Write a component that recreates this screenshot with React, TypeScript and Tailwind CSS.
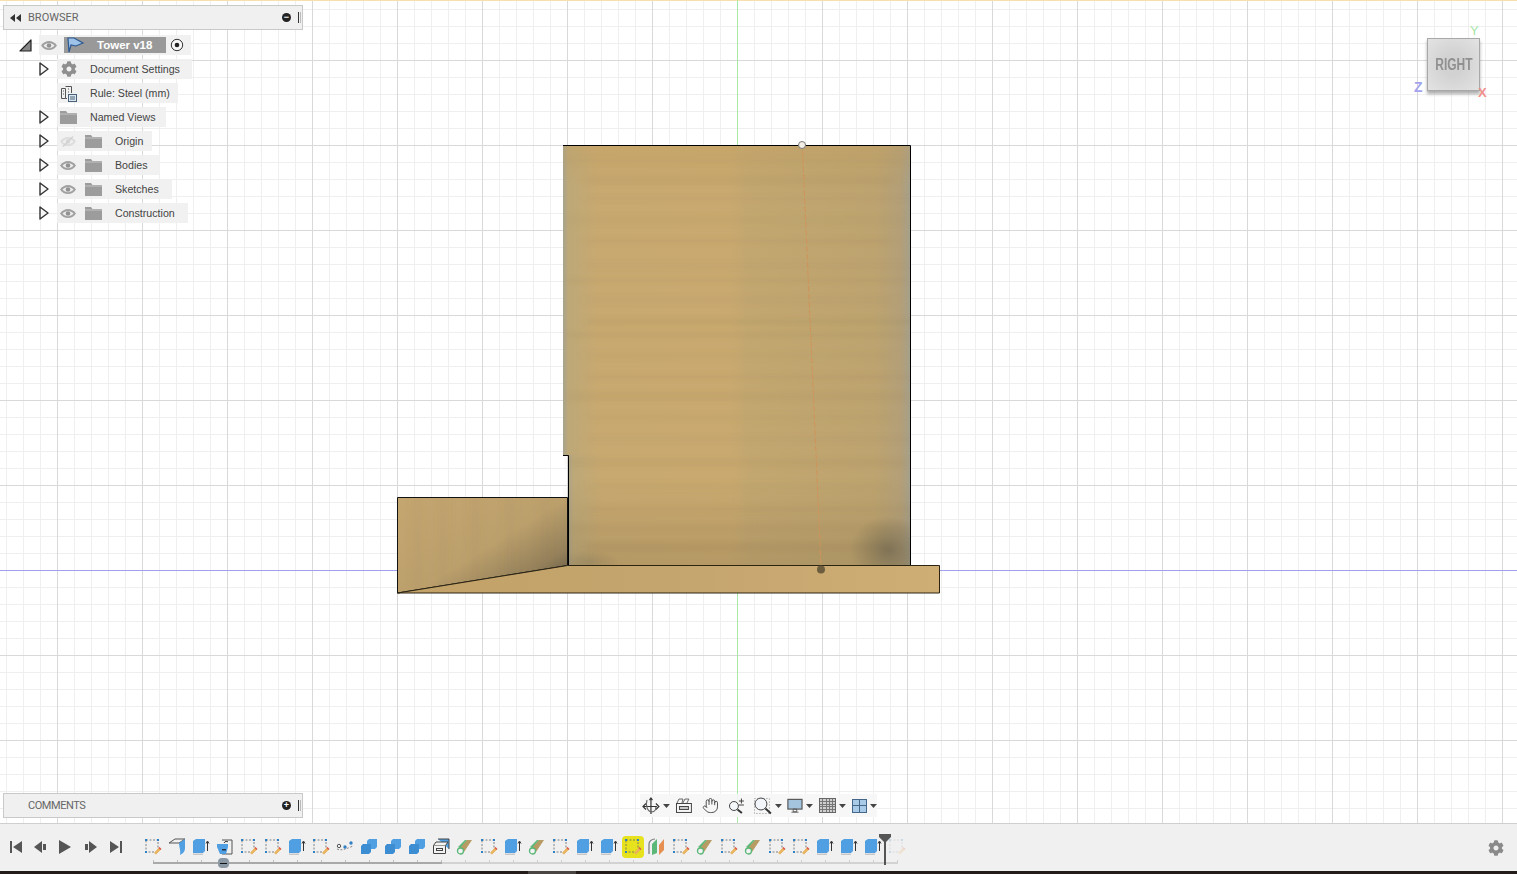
import React from 'react';
import { FaCog } from 'react-icons/fa';
import { Hand } from 'lucide-react';

const STREAKS = [
  [158, 6, 0.06], [176, 9, 0.08], [196, 5, 0.05], [215, 10, 0.06], [238, 6, 0.07], [262, 7, 0.05], [278, 5, 0.08],
  [296, 8, 0.05], [318, 7, 0.09], [332, 6, 0.1], [352, 7, 0.06], [374, 6, 0.07], [392, 9, 0.08], [414, 7, 0.06],
  [436, 6, 0.05], [458, 9, 0.08], [482, 8, 0.06], [506, 6, 0.07], [524, 8, 0.08], [542, 10, 0.12],
];

const BLOCK_STRIPES = [412, 438, 470, 505, 540];

const Model = () => (
  <svg className="absolute left-0 top-0" width="1517" height="823">
    <defs>
      <linearGradient id="wall" x1="0" x2="1" y1="0" y2="0">
        <stop offset="0" stopColor="#a8a38f" />
        <stop offset="0.015" stopColor="#bda878" />
        <stop offset="0.1" stopColor="#c8a970" />
        <stop offset="0.48" stopColor="#c9a96f" />
        <stop offset="0.53" stopColor="#c3a770" />
        <stop offset="0.9" stopColor="#bda36f" />
        <stop offset="0.975" stopColor="#b39f78" />
        <stop offset="1" stopColor="#a6a08a" />
      </linearGradient>
      <linearGradient id="wallFade" x1="0" x2="0" y1="0" y2="1">
        <stop offset="0" stopColor="#c19c5c" stopOpacity="0.3" />
        <stop offset="0.1" stopColor="#c19c5c" stopOpacity="0" />
        <stop offset="0.8" stopColor="#6f5f3f" stopOpacity="0" />
        <stop offset="1" stopColor="#6f5f3f" stopOpacity="0.22" />
      </linearGradient>
      <radialGradient id="shadeR" cx="0.5" cy="0.5" r="0.5">
        <stop offset="0" stopColor="#5f5a48" stopOpacity="0.55" />
        <stop offset="1" stopColor="#5f5a48" stopOpacity="0" />
      </radialGradient>
      <linearGradient id="block" x1="0" x2="1" y1="0" y2="0.9">
        <stop offset="0" stopColor="#c4a670" />
        <stop offset="0.55" stopColor="#bca06c" />
        <stop offset="0.82" stopColor="#94805a" />
        <stop offset="1" stopColor="#5f5543" />
      </linearGradient>
      <linearGradient id="base" x1="0" x2="1" y1="0" y2="0">
        <stop offset="0" stopColor="#c2a268" />
        <stop offset="0.5" stopColor="#c4a56d" />
        <stop offset="1" stopColor="#cfae75" />
      </linearGradient>
      <filter id="soft" x="-5%" y="-5%" width="110%" height="110%">
        <feGaussianBlur stdDeviation="4 2" />
      </filter>
      <filter id="softX" x="-5%" y="-5%" width="110%" height="110%">
        <feGaussianBlur stdDeviation="4 1" />
      </filter>
      <clipPath id="wallClip">
        <rect x="564" y="146" width="346" height="419" />
      </clipPath>
      <clipPath id="blockClip">
        <polygon points="398,498 567,498 567,565 398,592" />
      </clipPath>
    </defs>

    <rect x="737" y="0" width="1" height="823" fill="#a6eaa6" />
    <rect x="0" y="570" width="1517" height="1" fill="#a0a0f2" />

    {/* tall wall */}
    <rect x="563" y="145" width="347" height="310" fill="url(#wall)" />
    <rect x="568" y="455" width="342" height="110" fill="url(#wall)" />
    <rect x="563" y="145" width="347" height="420" fill="url(#wallFade)" />
    <g clipPath="url(#wallClip)">
      <g filter="url(#soft)">
        {STREAKS.map(([y, h, o], i) => (
          <rect key={y} x={i % 3 === 0 ? 566 : 585} y={y} width={i % 3 === 1 ? 310 : 342} height={h} fill="#8a7146" opacity={o} />
        ))}
      </g>
      <ellipse cx="888" cy="550" rx="38" ry="34" fill="url(#shadeR)" />
      <ellipse cx="590" cy="562" rx="30" ry="12" fill="url(#shadeR)" opacity="0.4" />
    </g>
    <path d="M563 145.5H910.5V565M563 455.5H568.5V565" fill="none" stroke="#000" strokeWidth="1" />

    <line x1="802.5" y1="150" x2="821" y2="566" stroke="#d0945a" strokeDasharray="6 2" />

    {/* side block and base */}
    <polygon points="397.5,497.5 567.5,497.5 567.5,565.5 397.5,593" fill="url(#block)" stroke="#111" />
    <g clipPath="url(#blockClip)">
      <g filter="url(#softX)">
        {BLOCK_STRIPES.map((x) => (
          <rect key={x} x={x} y="498" width="10" height="95" fill="#7f6b45" opacity="0.06" />
        ))}
      </g>
    </g>
    <polygon points="397.5,593 567.5,565.5 940,565.5 940,593" fill="url(#base)" />
    <path d="M397.5 593L567.5 565.5H939.5V593H397.5" fill="none" stroke="#2b2413" />

    <circle cx="802" cy="145" r="3.5" fill="#f4f0e8" stroke="#777" />
    <circle cx="821" cy="569.5" r="4" fill="#6c5d3e" />
  </svg>
);

const Eye = ({ off }: { off?: boolean }) => (
  <svg width="16" height="11" viewBox="0 0 16 11" className={off ? 'opacity-25' : ''}>
    <path d="M0 5.5C4 -0.5 12 -0.5 16 5.5C12 11.5 4 11.5 0 5.5Z" fill="#a0a0a0" />
    <path d="M2.5 5.5C5.5 2 10.5 2 13.5 5.5C10.5 9 5.5 9 2.5 5.5Z" fill="#ededed" />
    <circle cx="8" cy="5.5" r="2.3" fill="#929292" />
    {off && <path d="M3 10.5L13 0.5" stroke="#777" strokeWidth="1.5" />}
  </svg>
);

const Folder = () => (
  <svg width="17" height="13" viewBox="0 0 17 13">
    <path d="M0 0H6L7.5 2H17V13H0Z" fill="#9c9c9c" />
    <rect x="0" y="2.5" width="17" height="1" fill="#c4c4c4" />
  </svg>
);

const Arrow = () => (
  <svg width="10" height="14" viewBox="0 0 10 14">
    <path d="M1 1L9 7L1 13Z" fill="#f6f6f6" stroke="#333" strokeWidth="1.4" strokeLinejoin="round" />
  </svg>
);

const RuleIcon = () => (
  <svg width="17" height="17" viewBox="0 0 17 17" fill="none" stroke="#555">
    <path d="M1.5 3.5H5.5V13.5H1.5ZM5.5 1.5H11.5V8M5.5 13.5H7M3 6H4M3 9H4M8 4H9M8 7H9" />
    <rect x="8.5" y="9.5" width="8" height="7" fill="#dfe7ee" stroke="#46607a" />
    <path d="M10 12H15M10 14H15" stroke="#46607a" />
  </svg>
);

const TreeRow = ({
  label,
  icon,
  eye,
  off,
  arrow = true,
  width,
}: {
  label: string;
  icon: React.ReactNode;
  eye?: boolean;
  off?: boolean;
  arrow?: boolean;
  width: string;
}) => (
  <div className="flex h-6 items-center pl-[39px]">
    <div className="flex w-[18px] items-center">{arrow && <Arrow />}</div>
    <div className={`flex h-5 items-center bg-[#f0f0f0]/90 ${width} ${eye ? '' : 'pl-[3px]'}`}>
      {eye && (
        <div className="flex w-[28px] items-center justify-center pr-[6px]">
          <Eye off={off} />
        </div>
      )}
      <div className="flex w-[17px] items-center justify-center">{icon}</div>
      <span className="ml-[13px] pt-[2px] text-[10.65px] text-[#444]">{label}</span>
    </div>
  </div>
);

const PanelBar = ({ title, sign, back }: { title: string; sign: string; back?: boolean }) => (
  <div className="flex h-[25px] w-[300px] items-center border border-[#c9c9c9] bg-[#f0f0f0] pl-[6px] pr-[1px]">
    <div className="w-[18px] text-[#333]">
      {back && (
        <svg width="12" height="8" viewBox="0 0 12 8" fill="#333">
          <path d="M5 0V8L0 4ZM11 0V8L6 4Z" />
        </svg>
      )}
    </div>
    <span className={`pt-px font-['Roboto',sans-serif] text-[11px] text-[#666] ${back ? '' : 'tracking-[-0.45px]'}`}>
      {title}
    </span>
    <div className="ml-auto flex h-[9px] w-[9px] items-center justify-center rounded-full bg-[#222] text-[9px] font-bold leading-none text-white">
      {sign}
    </div>
    <div className="ml-[7px] h-[11px] w-[3px] border-x border-l-[#333] border-r-[#bbb]" />
  </div>
);

const Caret = () => (
  <svg width="7" height="4" viewBox="0 0 7 4" fill="#444" className="ml-[3px]">
    <path d="M0 0H7L3.5 4Z" />
  </svg>
);

const NavBar = () => (
  <div className="absolute left-[640px] top-[794px] flex h-[23px] w-[237px] items-center bg-[#f6f6f6]/90 pl-[2px]">
    <svg width="18" height="18" viewBox="0 0 18 18" fill="none" stroke="#333" strokeWidth="1.2">
      <path d="M9 1V17M1 9.5H15M4 6.5L1 9.5L4 12.5M14 6.5L17 9.5L14 12.5" />
      <path d="M5 3C3 9 6 15 10 15C13 15 14 12 14 10" stroke="#666" />
      <path d="M7.5 3L9 1L10.5 3" />
    </svg>
    <Caret />
    <svg width="18" height="16" viewBox="0 0 18 16" fill="none" stroke="#444" className="ml-[5px]">
      <rect x="1.5" y="5.5" width="15" height="9" />
      <rect x="4.5" y="8.5" width="9" height="3" fill="#c9c9c9" />
      <path d="M2 5L4 1H8L7 5M8 5L10 1H14L12 5" stroke="#666" />
    </svg>
    <Hand size={17} strokeWidth={1.3} color="#444" className="ml-[9px]" />
    <svg width="18" height="18" viewBox="0 0 18 18" fill="none" stroke="#444" className="ml-[9px]">
      <circle cx="6" cy="9" r="4.5" fill="#f5f8fb" />
      <path d="M9.5 12.5L14 16" stroke="#333" strokeWidth="2" />
      <path d="M11 4H16M13.5 1.5V6.5M11 8H16" strokeWidth="1" />
    </svg>
    <svg width="20" height="20" viewBox="0 0 20 20" fill="none" stroke="#444" className="ml-[7px]">
      <rect x="1.5" y="2.5" width="15" height="15" stroke="#888" strokeDasharray="1 2" />
      <circle cx="8" cy="8" r="6" fill="#f2f6fa" />
      <path d="M12.5 12.5L18 17.5" stroke="#333" strokeWidth="2" />
    </svg>
    <Caret />
    <svg width="16" height="16" viewBox="0 0 18 17" className="ml-[5px]">
      <rect x="1" y="1" width="16" height="11" fill="#a4c3dd" stroke="#555" strokeWidth="1.3" />
      <path d="M7 12H11V15H7ZM5 15.5H13" stroke="#555" fill="none" />
    </svg>
    <Caret />
    <div className="ml-[6px] grid h-[15px] w-[17px] grid-cols-[repeat(5,1fr)] grid-rows-[repeat(5,1fr)] gap-px border border-[#666] bg-[#777]">
      {Array.from({ length: 25 }).map((_, i) => (
        <div key={i} className="bg-[#cfcfcf]" />
      ))}
    </div>
    <Caret />
    <div className="ml-[6px] grid h-[14px] w-[15px] grid-cols-2 grid-rows-2 gap-px border border-[#45678a] bg-[#45678a]">
      <div className="bg-[#a9cbe8]" />
      <div className="bg-[#a9cbe8]" />
      <div className="bg-[#a9cbe8]" />
      <div className="bg-[#a9cbe8]" />
    </div>
    <Caret />
  </div>
);

const ViewCube = () => (
  <div className="absolute left-[1412px] top-[22px] h-[80px] w-[80px]">
    <div className="absolute left-[15px] top-[16px] flex h-[53px] w-[53px] items-center justify-center border border-[#a8a8a8] bg-[radial-gradient(circle,#d2d2d2_30%,#e3e3e3_100%)] shadow-[0_3px_3px_rgba(120,120,120,0.6)]">
      <span className="scale-x-75 text-[16px] font-bold text-[#909090]">RIGHT</span>
    </div>
    <span className="absolute left-[58px] top-[1px] text-[13px] leading-4 text-[#a8e6a8]">Y</span>
    <span className="absolute left-[2px] top-[57px] text-[14px] font-bold leading-4 text-[#a3a3ee]">Z</span>
    <span className="absolute left-[66px] top-[63px] text-[13px] font-bold leading-4 text-[#f0908c]">X</span>
  </div>
);

const Sketch = ({ faded }: { faded?: boolean }) => (
  <svg width="18" height="18" viewBox="0 0 18 18" fill="none" className={faded ? 'opacity-20' : ''}>
    <path d="M2 2H14V14H2Z" stroke="#666" strokeWidth="0.8" strokeDasharray="2 1.5" />
    <path d="M1 1H3V3H1ZM13 1H15V3H13ZM1 13H3V15H1Z" fill="#2f7fc4" />
    <path d="M10 15L15 9.5L17 11.5L12 16.5Z" fill="#eab35c" />
    <path d="M15 9.5L17 11.5" stroke="#d9534a" strokeWidth="1.5" />
  </svg>
);

const Extrude = () => (
  <svg width="18" height="18" viewBox="0 0 18 18">
    <path d="M1 3L4 1H13V13L11 15H1Z" fill="#4f9fe2" />
    <path d="M1 15.5H11V17H1Z" fill="#c8c8c8" />
    <path d="M15.5 13V4M14 5.5L15.5 3L17 5.5" stroke="#333" fill="none" />
  </svg>
);

const Loft = () => (
  <svg width="18" height="18" viewBox="0 0 18 18" fill="none">
    <path d="M3 10L11 2L16 2L8 14Z" fill="#b79b62" />
    <path d="M2 9L9 2L11 2L4 10Z" fill="#5bb878" />
    <circle cx="4.5" cy="13" r="3" stroke="#5bb878" strokeWidth="1.3" fill="#f2f2f2" />
  </svg>
);

const Combine = () => (
  <svg width="18" height="18" viewBox="0 0 18 18">
    <path d="M7 3L9 1H17V9L15 11H7Z" fill="#4f9fe2" />
    <path d="M1 8L3 6H11V14L9 16H1Z" fill="#3d8dd2" />
  </svg>
);

const Fillet = () => (
  <svg width="18" height="18" viewBox="0 0 18 18">
    <path d="M1 5L7 1H17L11 5Z" fill="none" stroke="#555" />
    <path d="M11 5L17 1V10C17 14 14 16 12 17C13 12 11 9 11 5Z" fill="#4f9fe2" />
  </svg>
);

const Derive = () => (
  <svg width="18" height="18" viewBox="0 0 18 18" fill="none">
    <path d="M6 2H16V16H6" stroke="#555" />
    <path d="M1 6H12V9L10 16H4L1 9Z" fill="#4f9fe2" />
    <path d="M8 5C9 3 11 3 12 4" stroke="#333" />
    <rect x="6" y="11" width="4" height="1.5" fill="#234" />
  </svg>
);

const Spline = () => (
  <svg width="18" height="18" viewBox="0 0 18 18" fill="none">
    <path d="M1 11C5 13 10 11 17 8" stroke="#888" strokeDasharray="2 1.5" />
    <circle cx="3" cy="8" r="1.7" stroke="#555" />
    <circle cx="9" cy="9" r="1.7" fill="#2f7fc4" />
    <circle cx="15" cy="5" r="1.7" fill="#2f7fc4" />
  </svg>
);

const BoxTool = () => (
  <svg width="18" height="18" viewBox="0 0 18 18" fill="none" stroke="#444">
    <path d="M6 1H17V11" fill="#4f9fe2" />
    <path d="M1.5 7.5H13.5V15.5H1.5Z" fill="#f2f2f2" />
    <path d="M1.5 7.5L4 4H16L13.5 7.5" fill="#f2f2f2" />
    <rect x="4.5" y="10.5" width="6" height="2" />
  </svg>
);

const Split = () => (
  <svg width="18" height="18" viewBox="0 0 18 18">
    <path d="M1 16V6C1 3 4 1 7 1" fill="none" stroke="#777" strokeWidth="1.2" />
    <path d="M4 6L9 1V15L4 17Z" fill="#5bb878" />
    <path d="M11 7L16 1V12L11 17Z" fill="#e58f52" />
  </svg>
);

type Kind = 's' | 'e' | 'l' | 'c' | 'f' | 'd' | 'p' | 'b' | 'x' | 'h' | 'z';

const TIMELINE: Kind[] = [
  's', 'f', 'e', 'd', 's', 's', 'e', 's', 'p', 'c', 'c', 'c', 'b', 'l', 's', 'e', 'l', 's', 'e', 'e',
  'h', 'x', 's', 'l', 's', 'l', 's', 's', 'e', 'e', 'e', 'z',
];

const feature = (k: Kind) => {
  switch (k) {
    case 's':
    case 'h':
      return <Sketch />;
    case 'z':
      return <Sketch faded />;
    case 'e':
      return <Extrude />;
    case 'l':
      return <Loft />;
    case 'c':
      return <Combine />;
    case 'f':
      return <Fillet />;
    case 'd':
      return <Derive />;
    case 'p':
      return <Spline />;
    case 'b':
      return <BoxTool />;
    default:
      return <Split />;
  }
};

const Timeline = () => (
  <div className="relative flex h-12 items-start border-t border-[#cfcfcf] bg-[#f0f0f0]">
    <div className="flex h-[46px] w-[141px] items-center gap-[8px] pl-[8px]">
      <svg width="16" height="16" viewBox="0 0 16 16" fill="#555"><path d="M2 2H4V14H2ZM14 2V14L5 8Z" /></svg>
      <svg width="16" height="16" viewBox="0 0 16 16" fill="#555"><path d="M10 2V14L2 8ZM11 5H14V11H11Z" /></svg>
      <svg width="18" height="18" viewBox="0 0 18 18" fill="#555"><path d="M3 2L15 9L3 16Z" /></svg>
      <svg width="16" height="16" viewBox="0 0 16 16" fill="#555" className="ml-px"><path d="M6 2V14L14 8ZM2 5H5V11H2Z" /></svg>
      <svg width="16" height="16" viewBox="0 0 16 16" fill="#555" className="ml-px"><path d="M2 2L11 8L2 14ZM12 2H14V14H12Z" /></svg>
    </div>
    <div className="flex">
      {TIMELINE.map((k, i) => (
        <div key={i} className="flex w-6 flex-col items-center">
          <div
            className={`mt-[12px] flex h-[22px] w-[22px] items-center justify-center rounded-sm ${
              k === 'h' ? 'bg-[#e6e21e]' : ''
            }`}
          >
            {feature(k)}
          </div>
          <div className={`mt-[2px] h-[4px] w-px ${i < 13 ? 'bg-[#bdbdbd]' : 'bg-[#cfcfcf]'}`} />
        </div>
      ))}
    </div>
    {/* track, rollback marker and playhead sit over the icons */}
    <div className="absolute left-[153px] top-[38px] h-[2px] w-[289px] bg-[#a9a9a9]" />
    <div className="absolute left-[442px] top-[38px] h-[2px] w-[455px] bg-[#d2d2d2]" />
    <div className="absolute left-[218px] top-[34px] flex h-[10px] w-[11px] items-center justify-center rounded-sm bg-[#8a97a5]">
      <div className="h-px w-[7px] bg-[#111]" />
    </div>
    <div className="absolute left-[884px] top-[10px] h-[31px] w-[2px] bg-[#555]" />
    <svg width="12" height="9" viewBox="0 0 12 9" fill="#555" className="absolute left-[879px] top-[10px]">
      <path d="M0 0H12V3L6 9L0 3Z" />
    </svg>
    <FaCog size={16} color="#8a8a8a" className="absolute left-[1488px] top-[16px]" />
  </div>
);

export default function App() {
  return (
    <div className="flex h-[874px] w-[1517px] flex-col overflow-hidden bg-white font-['Liberation_Sans',Arial,sans-serif]">
      <div className="relative h-[823px] bg-white [background-image:linear-gradient(to_bottom,#f8dfae_1px,transparent_1px),linear-gradient(to_right,#d9d9d9_1px,transparent_1px),linear-gradient(to_bottom,#d9d9d9_1px,transparent_1px),linear-gradient(to_right,#efefef_1px,transparent_1px),linear-gradient(to_bottom,#efefef_1px,transparent_1px)] [background-position:0_0,57px_0,0_60px,6px_0,0_9px] [background-repeat:no-repeat,repeat,repeat,repeat,repeat] [background-size:100%_1px,85px_85px,85px_85px,17px_17px,17px_17px]">
        <Model />

        <div className="absolute left-[3px] top-[5px]">
          <PanelBar title="BROWSER" sign="−" back />
        </div>

        <div className="absolute left-0 top-[33px] flex w-[300px] flex-col">
          <div className="flex h-6 items-center pl-[19px]">
            <svg width="13" height="13" viewBox="0 0 13 13" className="mr-[7px]">
              <path d="M12 1V12H1Z" fill="#888" stroke="#222" strokeWidth="1.2" strokeLinejoin="round" />
            </svg>
            <div className="flex h-5 w-[152px] items-center bg-[#f0f0f0]/90">
              <div className="flex w-[25px] items-center justify-center pr-[5px]">
                <Eye />
              </div>
              <div className="flex h-4 w-[102px] items-center bg-[#999]">
                <svg width="20" height="16" viewBox="0 0 20 16" className="ml-[2px]">
                  <path d="M2 1L8 1L17 6L10 9L5 8L3 15Z" fill="#9fc2e8" stroke="#2c5a90" strokeWidth="1.2" />
                </svg>
                <span className="ml-[11px] pt-px text-[11.5px] font-bold text-white">Tower v18</span>
              </div>
              <svg width="14" height="14" viewBox="0 0 14 14" className="ml-[4px]">
                <circle cx="7" cy="7" r="5.7" fill="#f7f7f7" stroke="#333" />
                <circle cx="7" cy="7" r="2.3" fill="#222" />
              </svg>
            </div>
          </div>
          <TreeRow label="Document Settings" icon={<FaCog size={16} color="#8f8f8f" />} width="w-[135px]" />
          <TreeRow label="Rule: Steel (mm)" icon={<RuleIcon />} arrow={false} width="w-[121px]" />
          <TreeRow label="Named Views" icon={<Folder />} width="w-[109px]" />
          <TreeRow label="Origin" icon={<Folder />} eye off width="w-[95px]" />
          <TreeRow label="Bodies" icon={<Folder />} eye width="w-[103px]" />
          <TreeRow label="Sketches" icon={<Folder />} eye width="w-[115px]" />
          <TreeRow label="Construction" icon={<Folder />} eye width="w-[131px]" />
        </div>

        <NavBar />
        <ViewCube />

        <div className="absolute left-[3px] top-[793px]">
          <PanelBar title="COMMENTS" sign="+" />
        </div>
      </div>
      <Timeline />
      <div className="flex h-[3px] bg-[#241c1a]">
        <div className="ml-[528px] h-full w-[48px] bg-[#4a4443]" />
      </div>
    </div>
  );
}
